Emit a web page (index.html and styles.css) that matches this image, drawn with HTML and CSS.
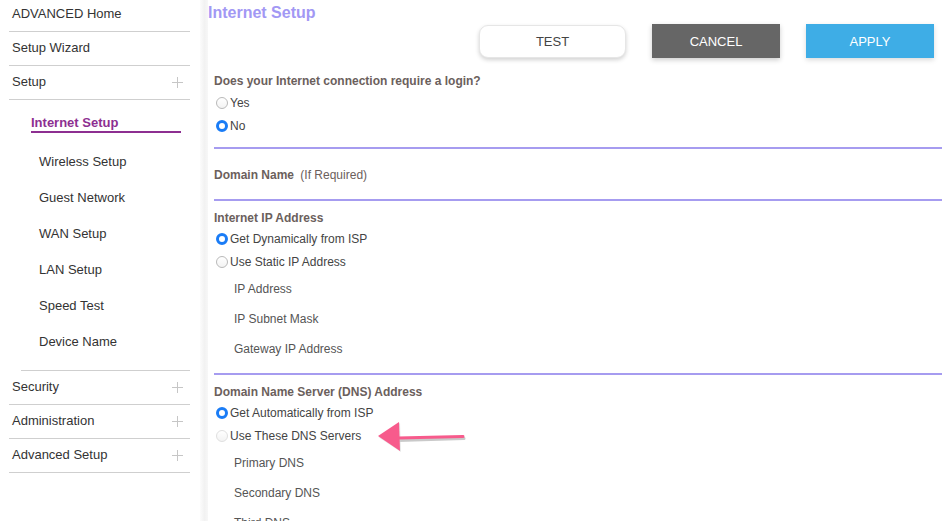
FILE: index.html
```html
<!DOCTYPE html>
<html lang="en">
<head>
    <meta charset="UTF-8">
    <meta name="viewport" content="width=device-width, initial-scale=1.0">
    <title>Internet Setup</title>
    <link rel="stylesheet" href="styles.css">
</head>
<body>
    <aside class="sidebar">
        <ul class="menu">
            <li class="menu-item first">ADVANCED Home</li>
            <li class="menu-item">Setup Wizard</li>
            <li class="menu-item">Setup
                <svg class="plus" width="11" height="11" viewBox="0 0 11 11"><path d="M5.5 0V11M0 5.5H11" stroke="#c6c6c6" stroke-width="1"/></svg>
            </li>
            <li class="submenu">
                <div class="sub-active">Internet Setup</div>
                <div class="sub-item">Wireless Setup</div>
                <div class="sub-item">Guest Network</div>
                <div class="sub-item">WAN Setup</div>
                <div class="sub-item">LAN Setup</div>
                <div class="sub-item">Speed Test</div>
                <div class="sub-item">Device Name</div>
            </li>
            <li class="menu-item">Security
                <svg class="plus" width="11" height="11" viewBox="0 0 11 11"><path d="M5.5 0V11M0 5.5H11" stroke="#c6c6c6" stroke-width="1"/></svg>
            </li>
            <li class="menu-item">Administration
                <svg class="plus" width="11" height="11" viewBox="0 0 11 11"><path d="M5.5 0V11M0 5.5H11" stroke="#c6c6c6" stroke-width="1"/></svg>
            </li>
            <li class="menu-item">Advanced Setup
                <svg class="plus" width="11" height="11" viewBox="0 0 11 11"><path d="M5.5 0V11M0 5.5H11" stroke="#c6c6c6" stroke-width="1"/></svg>
            </li>
        </ul>
    </aside>
    <div class="strip"></div>

    <main class="content">
        <h1>Internet Setup</h1>
        <div class="actions">
            <button class="btn btn-test">TEST</button>
            <button class="btn btn-cancel">CANCEL</button>
            <button class="btn btn-apply">APPLY</button>
        </div>

        <section class="block first-block">
            <div class="heading">Does your Internet connection require a login?</div>
            <label class="radio-row"><span class="radio"></span>Yes</label>
            <label class="radio-row"><span class="radio checked"></span>No</label>
        </section>

        <section class="block domain">
            <div class="heading">Domain Name <span class="note">(If Required)</span></div>
        </section>

        <section class="block ip-block">
            <div class="heading">Internet IP Address</div>
            <label class="radio-row"><span class="radio checked"></span>Get Dynamically from ISP</label>
            <label class="radio-row"><span class="radio"></span>Use Static IP Address</label>
            <div class="field">IP Address</div>
            <div class="field">IP Subnet Mask</div>
            <div class="field">Gateway IP Address</div>
        </section>

        <section class="block dns-block">
            <div class="heading">Domain Name Server (DNS) Address</div>
            <label class="radio-row"><span class="radio checked"></span>Get Automatically from ISP</label>
            <label class="radio-row"><span class="radio faded"></span>Use These DNS Servers</label>
            <div class="field">Primary DNS</div>
            <div class="field">Secondary DNS</div>
            <div class="field">Third DNS</div>
        </section>

        <!-- annotation arrow over the content -->
        <svg class="arrow" width="92" height="36" viewBox="0 0 92 36">
            <path d="M20 19.5 L86 17.5" stroke="#c9c9c9" stroke-width="3" stroke-linecap="round"/>
            <path d="M1 16.5 L22 2 L23 31 Z" fill="#d0d0d0" opacity="0.5"/>
            <path d="M20 17 L85 15.5" stroke="#f75b8c" stroke-width="3" stroke-linecap="round"/>
            <path d="M0 15 L21 1 L22 30 Z" fill="#f75b8c"/>
        </svg>
    </main>
</body>
</html>
```

FILE: styles.css
```css
html, body {
    height: 100%;
}

body {
    margin: 0;
    font-family: "Liberation Sans", Arial, Helvetica, sans-serif;
    background-color: #fff;
    color: #333;
    display: flex;
    overflow: hidden;
}

.sidebar {
    width: 200px;
    flex-shrink: 0;
}

.strip {
    width: 8px;
    flex-shrink: 0;
    background: linear-gradient(to right, #fcfcfc, #f2f2f2 55%, #f7f7f7);
}

.menu {
    list-style: none;
    margin: 0 0 0 9px;
    padding: 0;
    width: 181px;
}

.menu-item {
    display: flex;
    align-items: center;
    justify-content: space-between;
    font-size: 13px;
    line-height: 16px;
    padding: 8px 7px 9px 3px;
    border-bottom: 1px solid #cfcfcf;
    color: #333;
}

.menu-item.first {
    padding-top: 6px;
}

.submenu {
    margin-left: 12px;
    padding: 15px 0 10px 0;
    border-bottom: 1px solid #cfcfcf;
}

.sub-active {
    margin-left: 10px;
    width: 150px;
    font-size: 13px;
    font-weight: bold;
    line-height: 16px;
    color: #8d2f91;
    border-bottom: 2px solid #8d2f91;
    margin-bottom: 11px;
}

.sub-item {
    padding-left: 18px;
    font-size: 13px;
    line-height: 36px;
    color: #333;
}

.content {
    flex: 1;
    position: relative;
    padding-top: 2px;
}

h1 {
    margin: 0;
    font-size: 16px;
    line-height: 21px;
    color: #a298f4;
}

.actions {
    display: flex;
    justify-content: flex-end;
    align-items: center;
    gap: 26px;
    margin-top: 1px;
    padding-right: 8px;
}

.btn {
    font-family: "Liberation Sans", Arial, Helvetica, sans-serif;
    font-size: 13px;
    height: 34px;
    width: 128px;
    border: none;
    cursor: pointer;
}

.btn-test {
    width: 147px;
    height: 33px;
    background-color: #fff;
    color: #444;
    border-radius: 9px;
    border: 1px solid #e6e6e6;
    box-shadow: 0 2px 4px rgba(0, 0, 0, 0.18);
    margin-top: 1px;
}

.btn-cancel {
    background-color: #666;
    color: #fff;
    box-shadow: 0 2px 5px rgba(0, 0, 0, 0.2);
}

.btn-apply {
    background-color: #3eade6;
    color: #fff;
    box-shadow: 0 2px 5px rgba(0, 0, 0, 0.15);
}

.block {
    margin-left: 6px;
    padding: 8px 0 10px 0;
    border-bottom: 2px solid #a69cf0;
}

.block:last-of-type {
    border-bottom: none;
}

.first-block {
    padding-top: 15px;
    padding-bottom: 10px;
}

.domain {
    padding: 18px 0 16px 0;
}

.ip-block,
.dns-block {
    padding-top: 9px;
}

.heading {
    font-size: 12px;
    font-weight: bold;
    line-height: 16px;
    color: #6b605c;
    margin-bottom: 2px;
}

.ip-block .heading,
.dns-block .heading {
    margin-bottom: 1px;
}

.domain .heading {
    margin-bottom: 0;
}

.note {
    font-weight: normal;
    margin-left: 3px;
}

.radio-row {
    display: flex;
    align-items: center;
    height: 23px;
    font-size: 12px;
    color: #444;
    padding-left: 2px;
}

.radio {
    box-sizing: border-box;
    width: 12px;
    height: 12px;
    border-radius: 50%;
    border: 1px solid #b9b9b9;
    background: linear-gradient(#fff, #f3f3f3);
    margin-right: 2px;
    flex-shrink: 0;
}

.radio.checked {
    border: 3.5px solid #1a7cf6;
    background: #fff;
}

.radio.faded {
    border-color: #e0e0e0;
}

.field {
    height: 28px;
    padding-top: 2px;
    line-height: 28px;
    padding-left: 20px;
    font-size: 12px;
    color: #555;
}

.arrow {
    position: absolute;
    left: 170px;
    top: 421px;
}
```
